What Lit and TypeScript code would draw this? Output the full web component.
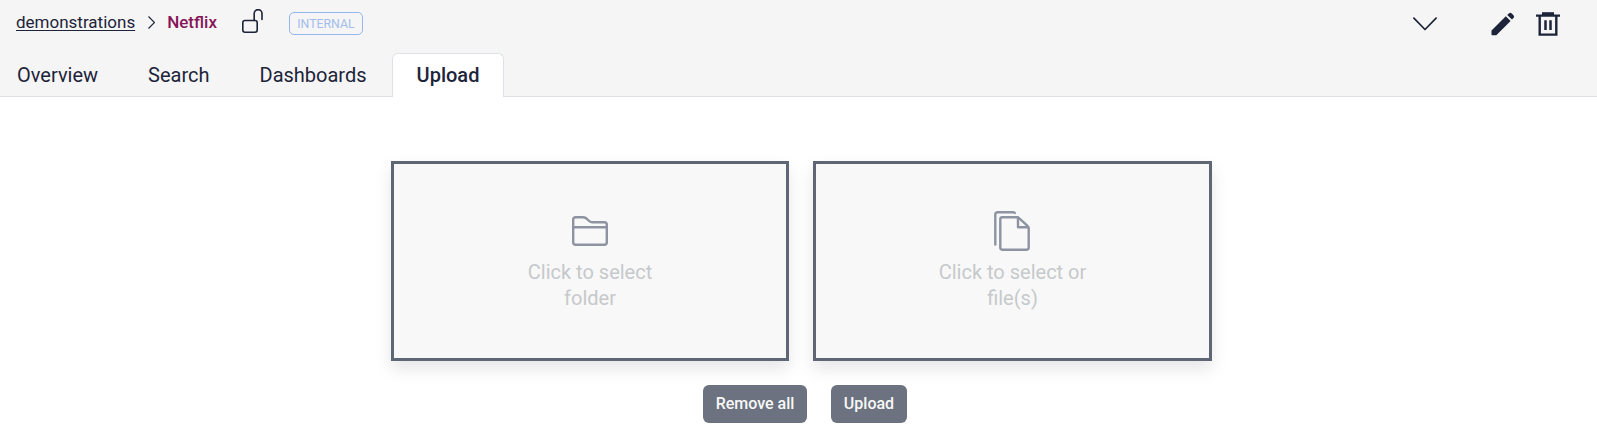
import { LitElement, html, css, svg } from "lit";
import { customElement, property } from "lit/decorators.js";

const folderIcon = svg`<svg width="36" height="30" viewBox="0 0 36 30" fill="none" stroke="#8d93a0" stroke-width="2.400" stroke-linejoin="round">
  <path d="M1.200 26.300V3.700C1.200 2.200 2.200 1.200 3.700 1.200H11c2 0 3.200.8 4.400 2.100l1.200 1.200C17.700 5.600 18.700 6.200 20 6.200H32.300C33.800 6.200 34.800 7.200 34.800 8.700V26.300C34.800 27.800 33.800 28.800 32.300 28.800H3.700C2.200 28.800 1.200 27.800 1.200 26.300ZM1.200 11.300H34.800"/></svg>`;

const filesIcon = svg`<svg width="36" height="40" viewBox="0 0 36 40" fill="none" stroke="#8d93a0" stroke-width="2.400" stroke-linejoin="round" stroke-linecap="round">
  <path d="M1.300 33.500V3.500C1.300 2 2.200 1.200 3.500 1.200H18.500C19.500 1.200 20.300 1.500 20.800 1.900"/>
  <path d="M6.300 36.600V8.400C6.300 7.200 7.200 6.300 8.300 6.300H22.500C23.600 6.300 24.500 6.600 25.300 7.300L33 14.300C33.900 15.100 34.700 16 34.700 17.500V36.600C34.700 37.800 33.900 38.700 32.700 38.700H8.300C7.200 38.700 6.300 37.800 6.300 36.600Z"/>
  <path d="M24 6.500V16.300H34.200"/></svg>`;

@customElement("drop-card")
class DropCard extends LitElement {
  @property() label = "";
  static styles = css`
    :host { box-sizing: border-box; display: flex; flex-direction: column; align-items: center;
      height: 200px; padding-top: 42px; border: 3px solid #5f6777; background: #f8f8f8;
      box-shadow: 0 8px 16px rgba(0, 0, 0, 0.1); }
    .icon { display: flex; align-items: center; justify-content: center; height: 50px; }
    .icon ::slotted(*) { display: block; }
    .label { width: 160px; text-align: center; color: #c6c9cb; font-size: 20px; line-height: 26px; margin-top: 3px; }
  `;
  render() {
    return html`<div class="icon"><slot></slot></div><div class="label">${this.label}</div>`;
  }
}

@customElement("app-root")
class AppRoot extends LitElement {
  static styles = css`
    :host { display: block; height: 443px; overflow: hidden; background: #fff; color: #1d2439; font-family: Roboto, sans-serif; }
    * { box-sizing: border-box; }
    svg { display: block; flex: none; }
    header { height: 97px; background: #f5f5f5; display: flex; flex-direction: column; justify-content: space-between; }
    .bar { display: flex; align-items: flex-start; justify-content: space-between; height: 46px; padding: 0 37px 0 16px; }
    .crumbs { display: flex; align-items: flex-start; font-size: 17px; line-height: 24px; }
    .crumbs a { margin-top: 10px; text-decoration: underline; text-underline-offset: 2px; }
    .crumbs .sep { margin: 16px 0 0 12.500px; }
    .crumbs .current { margin: 10px 0 0 12.500px; font-weight: 500; color: #861657; }
    .crumbs .lock { margin: 9px 0 0 25px; }
    .badge { margin: 12px 0 0 26px; width: 74px; height: 23px; border: 1px solid #93b7ec; border-radius: 5px; color: #a3bdec;
      font-size: 12.300px; line-height: 22px; text-align: center; }
    .actions { display: flex; align-items: flex-start; padding-top: 9px; }
    .actions .down { margin: 8px 51px 0 0; }
    .actions .edit { margin-right: 18px; }
    .actions .bin { margin-top: 3px; }
    .tabs { display: flex; height: 44px; }
    .tab { padding: 0 25px; border-bottom: 1px solid #dee0e6; font-size: 20px; line-height: 44px; }
    .tab.first { padding-left: 17px; }
    .tab.active { font-weight: 500; background: #fff; border: 1px solid #dee2e6; border-bottom: 0; border-radius: 6px 6px 0 0; padding: 0 24px; line-height: 42px; }
    .rest { flex: 1; border-bottom: 1px solid #dee0e6; }
    main { padding: 64px 385px 0 391px; }
    .cards { display: grid; grid-template-columns: 398px 399px; gap: 24px; }
    .cards .files { margin-right: 1px; }
    .buttons { display: flex; gap: 24px; margin: 24px 0 0 312px; }
    button { height: 38px; padding: 0; border: 0; border-radius: 6px; background: #6c727f; color: #f8f8f8;
      font: 500 16px/24px Roboto, sans-serif; }
    .remove { width: 104px; }
    .upload { width: 76px; }
  `;
  render() {
    return html`
      <header>
        <div class="bar">
          <div class="crumbs">
            <a>demonstrations</a>
            <svg class="sep" width="7" height="13" viewBox="0 0 7 13" fill="none" stroke="#1d2439" stroke-width="1.2"><path d="M.5.5l6 6-6 6"/></svg>
            <span class="current">Netflix</span>
            <svg class="lock" width="21" height="24" viewBox="0 0 21 24" fill="none" stroke="#1d2439" stroke-width="1.600" stroke-linecap="round">
              <rect x=".8" y="11.500" width="14.400" height="11.700" rx="2.200"/><path d="M12.200 11.500V4.500a3.900 3.900 0 0 1 7.800 0V10.500"/></svg>
            <span class="badge">INTERNAL</span>
          </div>
          <div class="actions">
            <svg class="down" width="24" height="14" viewBox="0 0 24 14" fill="none" stroke="#1d2439" stroke-width="1.700" stroke-linecap="round" stroke-linejoin="round"><path d="M.9 1.200L12 12.500 23.100 1.200"/></svg>
            <svg class="edit" width="30" height="30" viewBox="0 0 30 30" fill="#1d2439"><path d="M3.500 21.600V25.500Q3.500 26.300 4.300 26.300H8.300L22.600 12 17.800 7.300ZM19.200 5.900 21.100 4.200Q22.300 3.300 23.500 4.300L25.700 6.500Q26.600 7.700 25.700 8.800L24 10.600Z"/></svg>
            <svg class="bin" width="24" height="24" viewBox="0 0 24 24" fill="none" stroke="#1d2439"><path stroke-width="2.400" d="M0 3.600H24M3.700 3.500V22.600H20.300V3.500"/><path fill="#1d2439" stroke="none" d="M6 .2H18V3H6z"/><path stroke-width="2.500" d="M9.500 8.200V18M14.500 8.200V18"/></svg>
          </div>
        </div>
        <nav class="tabs">
          <div class="tab first">Overview</div>
          <div class="tab">Search</div>
          <div class="tab">Dashboards</div>
          <div class="tab active">Upload</div>
          <div class="rest"></div>
        </nav>
      </header>
      <main>
        <div class="cards">
          <drop-card label="Click to select folder">${folderIcon}</drop-card>
          <drop-card label="Click to select or file(s)"><span class="files">${filesIcon}</span></drop-card>
        </div>
        <div class="buttons">
          <button class="remove">Remove all</button>
          <button class="upload">Upload</button>
        </div>
      </main>
    `;
  }
}
